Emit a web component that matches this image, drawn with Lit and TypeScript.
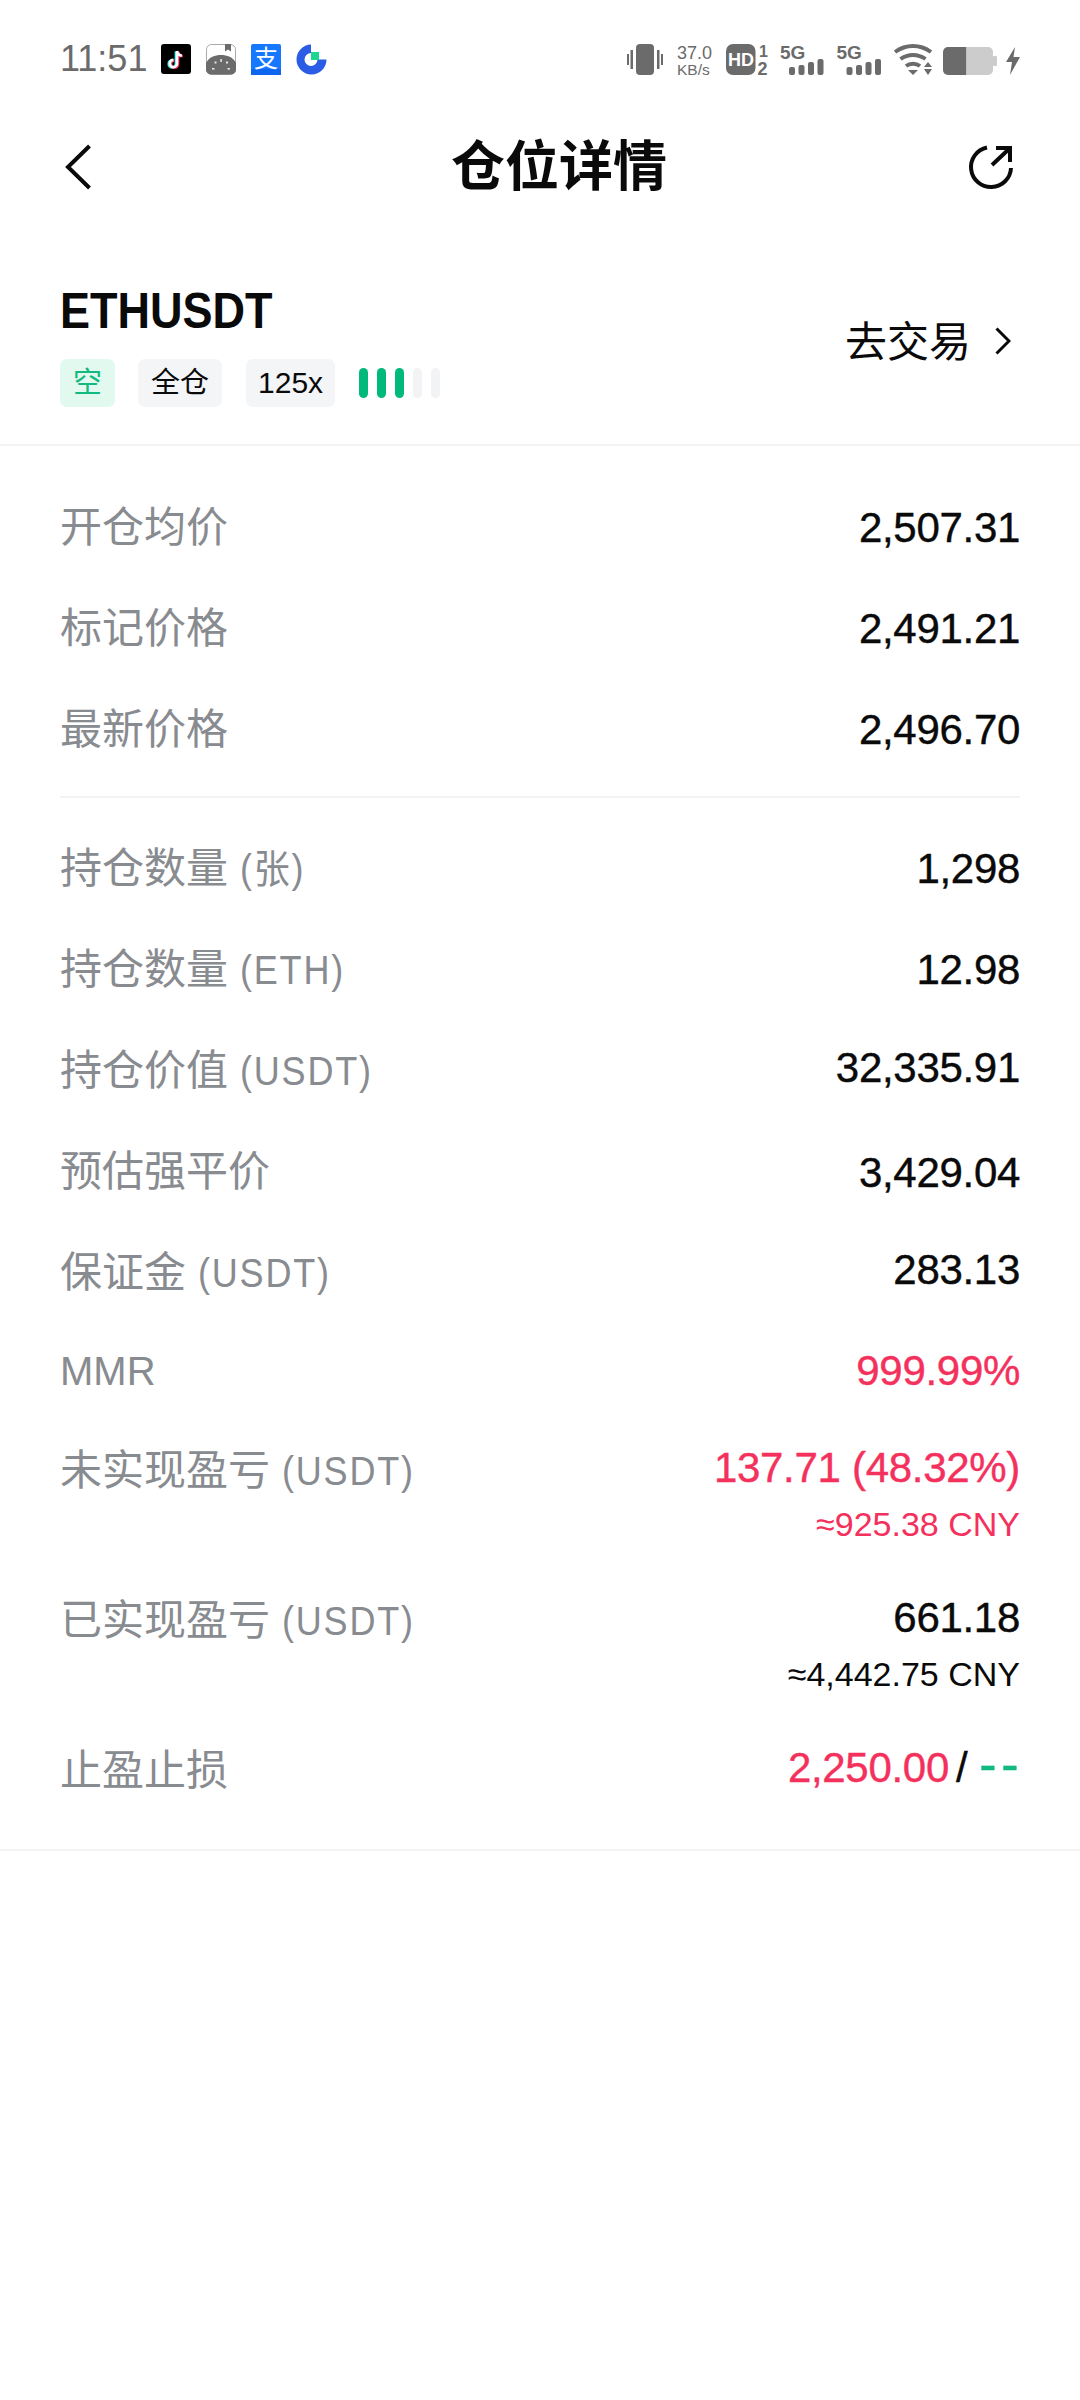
import { LitElement, html, css, svg } from "lit";
import { customElement } from "lit/decorators.js";

type Row = {
  label: string;
  unit?: string;
  value: string;
  sub?: string;
  tone?: string;
  latin?: boolean;
  pitch: number;
  lift?: number;
};

const priceRows: Row[] = [
  { label: "开仓均价", value: "2,507.31", pitch: 101 },
  { label: "标记价格", value: "2,491.21", pitch: 101 },
  { label: "最新价格", value: "2,496.70", pitch: 91 },
];

const positionRows: Row[] = [
  { label: "持仓数量", unit: "(张)", value: "1,298", pitch: 101 },
  { label: "持仓数量", unit: "(ETH)", value: "12.98", pitch: 101 },
  { label: "持仓价值", unit: "(USDT)", value: "32,335.91", pitch: 101, lift: -3 },
  { label: "预估强平价", value: "3,429.04", pitch: 101, lift: 1 },
  { label: "保证金", unit: "(USDT)", value: "283.13", pitch: 98, lift: -3 },
  { label: "MMR", value: "999.99%", tone: "red", latin: true, pitch: 100 },
  { label: "未实现盈亏", unit: "(USDT)", value: "137.71 (48.32%)", sub: "≈925.38 CNY", tone: "red", pitch: 150, lift: -3 },
  { label: "已实现盈亏", unit: "(USDT)", value: "661.18", sub: "≈4,442.75 CNY", pitch: 150, lift: -3 },
];

@customElement("status-bar")
class StatusBar extends LitElement {
  static styles = css`
    :host {
      display: flex;
      align-items: center;
      height: 60px;
      padding: 28px 60px 0 60px;
      color: #6b6b6b;
      font-family: "Liberation Sans", sans-serif;
    }
    .time {
      font-size: 36px;
      line-height: 60px;
      margin-right: 14px;
      margin-top: 2px;
    }
    .left {
      display: flex;
      align-items: center;
      gap: 15px;
      margin-top: 3px;
    }
    .left text {
      font-family: "Noto Sans CJK SC", sans-serif;
      font-size: 24px;
      fill: #fff;
    }
    status-icons {
      margin-left: auto;
      margin-top: 1px;
    }
    svg {
      display: block;
      overflow: visible;
    }
  `;

  render() {
    const note = "M16 7v12.500a3.600 3.600 0 1 1-3.600-3.600M16 7c.4 2.800 2.200 4.300 4.800 4.600";
    return html`
      <span class="time">11:51</span>
      <div class="left">
        <svg width="30" height="31" viewBox="0 0 30 31">
          <rect width="30" height="30" rx="3" fill="#000" />
          <path d="${note}" fill="none" stroke="#25f4ee" stroke-width="2.800" transform="translate(-1 .4)" />
          <path d="${note}" fill="none" stroke="#fe2c55" stroke-width="2.800" transform="translate(1 .6)" />
          <path d="${note}" fill="none" stroke="#fff" stroke-width="2.600" />
        </svg>
        <svg width="30" height="31" viewBox="0 0 30 31">
          <rect x=".5" y=".5" width="29" height="30" rx="5" fill="#fff" stroke="#aaa" />
          <path d="M0 25V19C3 13 9 11 15 11s12 2 15 8v6.500a5 5 0 0 1-5 5H5a5 5 0 0 1-5-5z" fill="#6b6b6b" />
          <path d="M19 0h6v7.500l-3-2-3 2z" fill="#6b6b6b" />
          <g fill="#e4e4e4">
            <rect x="14.300" y="15" width="1.600" height="3" />
            <rect x="8.500" y="17.500" width="2" height="2" />
            <rect x="20" y="17.500" width="2" height="2" />
            <rect x="6" y="24" width="2.500" height="1.600" />
            <rect x="21.500" y="24" width="2.500" height="1.600" />
          </g>
        </svg>
        <svg width="30" height="31" viewBox="0 0 30 31">
          <rect width="30" height="31" rx="2" fill="#1677ff" />
          <rect y="25" width="30" height="6" fill="#0f66ee" />
          <text x="3" y="23">支</text>
        </svg>
        <svg width="31" height="31" viewBox="0 0 31 31">
          <path d="M15 .5A15 15 0 1 0 30.500 15.500H21.500A6.500 6.500 0 1 1 15 9z" fill="#2a5ce6" />
          <rect x="15" y="8" width="8" height="8" fill="#1fd68f" />
        </svg>
      </div>
      <status-icons></status-icons>
    `;
  }
}

@customElement("status-icons")
class StatusIcons extends LitElement {
  static styles = css`
    :host {
      display: block;
    }
    svg {
      display: block;
      overflow: visible;
    }
    text {
      font-family: "Liberation Sans", sans-serif;
      fill: #6b6b6b;
    }
    .bold {
      font-weight: 700;
    }
    .hd {
      fill: #fff;
    }
  `;

  private bars(x: number) {
    return svg`
      <rect x="${x}" y="24" width="6" height="8" rx="2" />
      <rect x="${x + 9.500}" y="22" width="6" height="10" rx="2" />
      <rect x="${x + 19}" y="19" width="6" height="13" rx="2" />
      <rect x="${x + 28.500}" y="16" width="6" height="16" rx="2" />
    `;
  }

  render() {
    return html`
      <svg width="393" height="36" viewBox="0 -2 393 36" fill="#6b6b6b">
        <rect x="9" y="1" width="18" height="31" rx="4" />
        <rect x="0" y="11" width="2" height="11" />
        <rect x="3.500" y="7" width="2.500" height="19" />
        <rect x="30" y="7" width="2.500" height="19" />
        <rect x="34" y="11" width="2" height="11" />

        <text x="50" y="16" font-size="18">37.0</text>
        <text x="50" y="32" font-size="15.500">KB/s</text>

        <rect x="99" y="1" width="29.500" height="31" rx="7" />
        <text x="101" y="23" font-size="18" class="bold hd">HD</text>
        <text x="132" y="14" font-size="16" class="bold">1</text>
        <text x="130.500" y="32" font-size="18" class="bold">2</text>

        <text x="153" y="16" font-size="19" class="bold">5G</text>
        ${this.bars(162)}
        <text x="209.500" y="16" font-size="19" class="bold">5G</text>
        ${this.bars(219.500)}

        <g fill="none" stroke="#6b6b6b" stroke-width="4">
          <path d="M268 9c11-8 25-8 36 0" />
          <path d="M273.500 16c7.500-5.500 17.500-5.500 25 0" />
          <path d="M279 23c4-3 10-3 14 0" />
        </g>
        <path d="M281 27h10l-5 5z" />
        <path d="M297 24l4-5 4 5zM297 26h8l-4 6z" />

        <path d="M316 9a5 5 0 0 1 5-5h18.500v28H321a5 5 0 0 1-5-5z" />
        <path d="M339.500 4H361a5 5 0 0 1 5 5v18a5 5 0 0 1-5 5h-21.500z" fill="#cccccc" />
        <rect x="366" y="13" width="4" height="10" rx="1" fill="#cccccc" />

        <path d="M388 4l-9 15h6l-2 13 10-18h-6.500z" />
      </svg>
    `;
  }
}

@customElement("info-row")
class InfoRow extends LitElement {
  static properties = { row: { attribute: false } };
  declare row: Row;

  static styles = css`
    :host {
      display: flex;
      justify-content: space-between;
      align-items: flex-start;
    }
    .label {
      font-size: 42px;
      line-height: 50px;
      color: #888b8f;
      white-space: nowrap;
    }
    .label.latin {
      font-size: 40px;
    }
    .unit {
      display: inline-block;
      margin-left: 12px;
      font-size: 40px;
      letter-spacing: 2px;
      transform: scaleX(0.9);
      transform-origin: left center;
    }
    .right {
      text-align: right;
    }
    .value {
      font-size: 42px;
      line-height: 50px;
      letter-spacing: -0.3px;
      color: #0a0a0a;
      -webkit-text-stroke: 0.4px currentColor;
    }
    .sub {
      font-size: 34px;
      line-height: 40px;
      margin-top: 11px;
      color: #0a0a0a;
    }
    .value.red,
    .sub.red {
      color: #f4315d;
    }
  `;

  render() {
    const { label, unit, value, sub, tone, latin, pitch, lift } = this.row;
    return html`
      <div class="label ${latin ? "latin" : ""}" style="height:${pitch}px">
        ${label}${unit ? html`<span class="unit">${unit}</span>` : ""}
      </div>
      <div class="right" style="margin-top:${lift ?? 0}px">
        <div class="value ${tone ?? ""}">${value}</div>
        ${sub ? html`<div class="sub ${tone ?? ""}">${sub}</div>` : ""}
      </div>
    `;
  }
}

@customElement("app-root")
export class AppRoot extends LitElement {
  static styles = css`
    :host {
      display: block;
      width: 1080px;
      height: 2400px;
      background: #fff;
      font-family: "Liberation Sans", "Noto Sans CJK SC", sans-serif;
      color: #0a0a0a;
      overflow: hidden;
    }
    .nav {
      display: flex;
      align-items: center;
      justify-content: space-between;
      height: 107px;
      padding: 25px 66px 0 64px;
    }
    .nav svg {
      display: block;
    }
    .nav h1 {
      margin: 0 0 0 56px;
      font-size: 54px;
      line-height: 60px;
      font-weight: 700;
    }
    .head {
      display: flex;
      justify-content: space-between;
      align-items: center;
      padding: 65px 69px 37px 60px;
      border-bottom: 2px solid #f2f3f5;
    }
    .symbol {
      font-size: 50px;
      line-height: 52px;
      font-weight: 700;
      transform: scaleX(0.9);
      transform-origin: left center;
    }
    .tags {
      display: flex;
      align-items: center;
      margin-top: 22px;
    }
    .tag {
      height: 48px;
      line-height: 48px;
      padding: 0 13px;
      border-radius: 7px;
      background: #f3f5f7;
      font-size: 29px;
      margin-right: 24px;
    }
    .tag.num {
      font-size: 30px;
      padding: 0 12px;
      margin-right: 24px;
    }
    .tag.short {
      background: #e2f9f0;
      color: #12b981;
      margin-right: 23px;
    }
    .lever {
      display: flex;
      gap: 9px;
    }
    .lever i {
      width: 9px;
      height: 30px;
      border-radius: 5px;
      background: #f2f3f5;
    }
    .lever i.on {
      background: #00b97a;
    }
    .trade {
      display: flex;
      align-items: center;
      gap: 24px;
      font-size: 42px;
      margin-top: -10px;
    }
    .trade span {
      margin-bottom: 6px;
    }
    .trade svg {
      display: block;
    }
    .group {
      padding: 0 60px;
    }
    .group.first {
      padding-top: 57px;
    }
    .line {
      height: 2px;
      background: #f2f3f5;
      margin: 0 60px 46px;
    }
    .tp {
      display: flex;
      justify-content: space-between;
      padding: 0 60px;
      height: 103px;
      border-bottom: 2px solid #f2f3f5;
      font-size: 42px;
      line-height: 50px;
      align-items: flex-start;
    }
    .tp .label {
      color: #888b8f;
    }
    .stops {
      display: flex;
      align-items: baseline;
      margin-top: -3px;
      letter-spacing: -0.3px;
      -webkit-text-stroke: 0.4px currentColor;
    }
    .red {
      color: #f4315d;
    }
    .slash {
      margin: 0 7px;
    }
    .green {
      color: #12b981;
      font-size: 52px;
      line-height: 0;
      letter-spacing: 4.700px;
      margin-right: -3.400px;
      margin-left: 5px;
    }
  `;

  render() {
    return html`
      <status-bar></status-bar>
      <div class="nav">
        <svg width="30" height="46" viewBox="0 0 30 46" fill="none" stroke="#0a0a0a" stroke-width="4">
          <path d="M25.500 2L4 23l21.500 21" />
        </svg>
        <h1>仓位详情</h1>
        <svg width="46" height="46" viewBox="0 0 46 46" fill="none" stroke="#0a0a0a" stroke-width="4">
          <path d="M19 3.500A20 20 0 1 0 43 24" />
          <path d="M24 21L41 5M28 4h14v14" />
        </svg>
      </div>
      <div class="head">
        <div>
          <div class="symbol">ETHUSDT</div>
          <div class="tags">
            <span class="tag short">空</span>
            <span class="tag">全仓</span>
            <span class="tag num">125x</span>
            <span class="lever">
              <i class="on"></i><i class="on"></i><i class="on"></i><i></i><i></i>
            </span>
          </div>
        </div>
        <div class="trade">
          <span>去交易</span>
          <svg width="16" height="28" viewBox="0 0 16 28" fill="none" stroke="#0a0a0a" stroke-width="3">
            <path d="M1.500 1.500L14 14 1.500 26.500" />
          </svg>
        </div>
      </div>
      <div class="group first">
        ${priceRows.map((r) => html`<info-row .row=${r}></info-row>`)}
      </div>
      <div class="line"></div>
      <div class="group">
        ${positionRows.map((r) => html`<info-row .row=${r}></info-row>`)}
      </div>
      <div class="tp">
        <span class="label">止盈止损</span>
        <span class="stops"><span class="red">2,250.00</span><span class="slash">/</span><span class="green">--</span></span>
      </div>
    `;
  }
}
